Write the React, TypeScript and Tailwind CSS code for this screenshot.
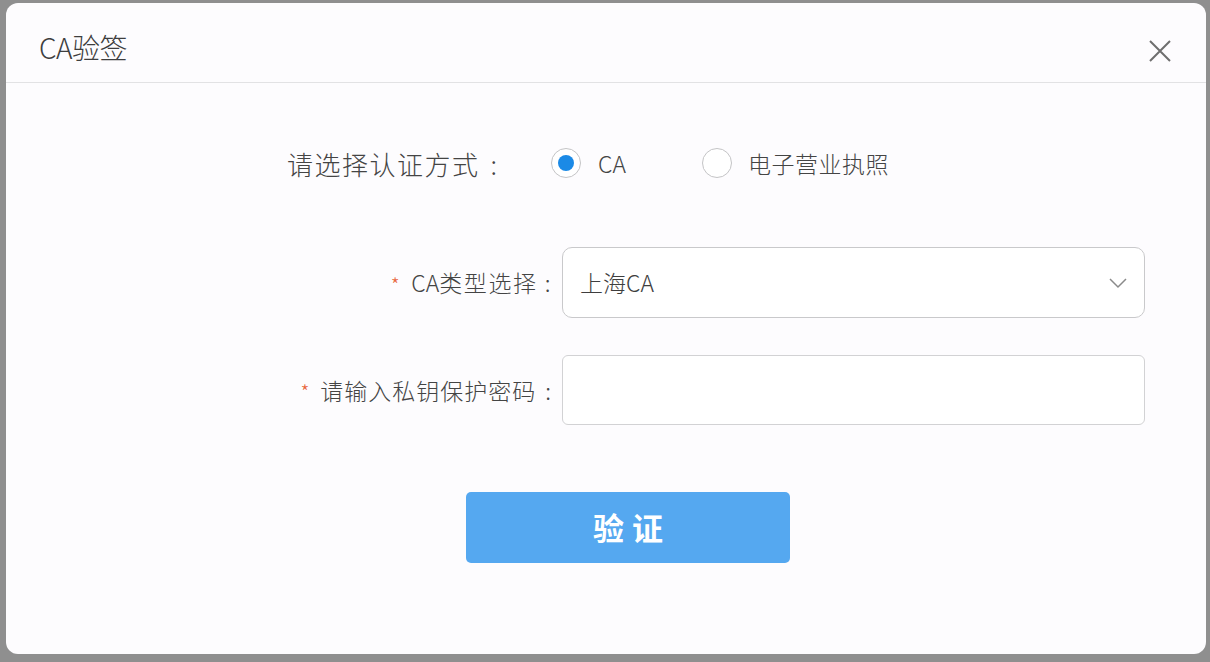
import { useState } from "react";

const font = "font-['Noto_Sans_CJK_SC','Noto_Sans',sans-serif]";

const Star = () => (
    <span className="mr-[10px] mt-[4px] text-[20px] leading-none text-[#e8643a]">*</span>
);

const Colon = ({ cls }: { cls: string }) => <span className={cls}>:</span>;

const App = () => {
    const [method, setMethod] = useState("CA");

    return (
        <div className={`w-[1210px] h-[662px] overflow-hidden bg-[#8f8f8f] pt-[3px] pl-[6px] ${font}`}>
            <div className="w-[1200px] h-[651px] rounded-[12px] bg-[#fdfcfe] flex flex-col">
                {/* header */}
                <div className="h-[80px] border-b border-[#e2e2e4] flex items-center justify-between pt-[8px] pl-[33px] pr-[34px]">
                    <span className="text-[28px] font-light text-[#3e3e3e] tracking-[-0.5px]">CA验签</span>
                    <button className="mt-[8px] w-[24px] h-[24px] flex items-center justify-center">
                        <svg width="24" height="24" viewBox="0 0 24 24" fill="none" stroke="#6e6e6e" strokeWidth="2">
                            <path d="M2 2L22 22M22 2L2 22" />
                        </svg>
                    </button>
                </div>

                {/* 认证方式 */}
                <div className="mt-[63px] flex items-center pl-[281px] h-[34px]">
                    <span className="text-[26px] font-light text-[#444] tracking-[1.5px]">请选择认证方式</span>
                    <Colon cls="ml-[11px] text-[26px] font-light text-[#444]" />
                    <label className="ml-[54px] flex items-center cursor-pointer" onClick={() => setMethod("CA")}>
                        <span className="w-[30px] h-[30px] rounded-full border border-[#c4c4c6] bg-white flex items-center justify-center">
                            {method === "CA" && <span className="w-[16px] h-[16px] rounded-full bg-[#1b8ae6]" />}
                        </span>
                        <span className="ml-[17px] text-[23px] font-light text-[#444]">CA</span>
                    </label>
                    <label className="ml-[76px] flex items-center cursor-pointer" onClick={() => setMethod("license")}>
                        <span className="w-[30px] h-[30px] rounded-full border border-[#c4c4c6] bg-white flex items-center justify-center">
                            {method === "license" && <span className="w-[16px] h-[16px] rounded-full bg-[#1b8ae6]" />}
                        </span>
                        <span className="ml-[16px] text-[23px] font-light text-[#444] tracking-[0.5px]">电子营业执照</span>
                    </label>
                </div>

                {/* CA类型 */}
                <div className="mt-[67px] flex items-center">
                    <div className="w-[550px] flex items-center justify-end pr-[4px] text-[23px] font-light text-[#444] tracking-[1.6px]">
                        <Star />
                        <span><span className="tracking-normal">CA</span>类型选择</span>
                        <Colon cls="ml-[7px]" />
                    </div>
                    <div className="ml-[6px] w-[583px] h-[71px] rounded-[10px] border border-[#c9c9cb] bg-white flex items-center justify-between pl-[17px] pr-[17px]">
                        <span className="text-[23px] font-light text-[#3e3e3e]">上海CA</span>
                        <svg width="18" height="12" viewBox="0 0 18 12" fill="none" stroke="#8a8a8a" strokeWidth="1.5">
                            <path d="M1 2L9 10L17 2" />
                        </svg>
                    </div>
                </div>

                {/* 密码 */}
                <div className="mt-[37px] flex items-center">
                    <div className="w-[550px] flex items-center justify-end pr-[4px] text-[23px] font-light text-[#444] tracking-[1px]">
                        <Star />
                        <span>请输入私钥保护密码</span>
                        <Colon cls="ml-[9px]" />
                    </div>
                    <input
                        type="password"
                        className="ml-[6px] w-[583px] h-[70px] rounded-[6px] border border-[#d2d2d4] bg-white outline-none px-[17px] text-[22px]"
                    />
                </div>

                {/* 验证 */}
                <div className="mt-[67px] pl-[460px]">
                    <button className="w-[324px] h-[71px] rounded-[5px] bg-[#55a8f0] text-white text-[31px] font-bold tracking-[8px] pl-[8px]">
                        验证
                    </button>
                </div>
            </div>
        </div>
    );
};

export default App;
